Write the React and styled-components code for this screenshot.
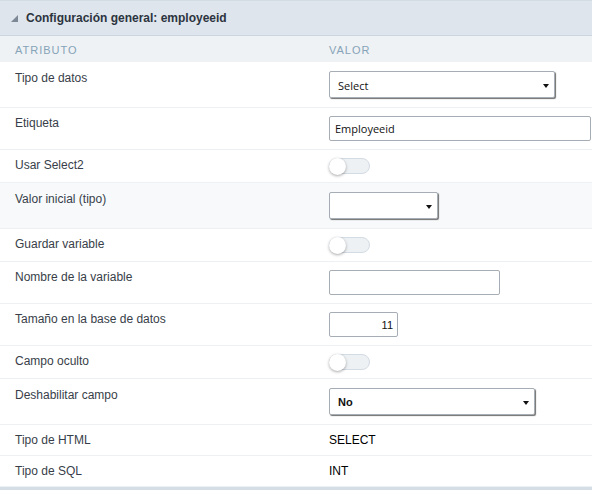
import React from 'react';
import styled, { createGlobalStyle } from 'styled-components';

const GlobalStyle = createGlobalStyle`
  html, body {
    margin: 0;
    padding: 0;
    background: #ffffff;
  }
  body {
    font-family: "Liberation Sans", Arial, sans-serif;
    font-size: 12px;
  }
`;

const Panel = styled.div`
  width: 592px;
  border-top: 1px solid #d3dbe3;
  border-bottom: 4px solid #d5dde5;
  box-sizing: border-box;
`;

const PanelHeader = styled.div`
  height: 34px;
  display: flex;
  align-items: center;
  gap: 8px;
  padding: 0 11px;
  background: #dfe5ec;
  border-bottom: 1px solid #cdd6df;
  font-weight: bold;
  font-size: 12px;
  color: #2c3440;
`;

const Corner = styled.span`
  width: 0;
  height: 0;
  border-style: solid;
  border-width: 0 0 7px 7px;
  border-color: transparent transparent #7d8896 transparent;
  margin-top: 1px;
`;

const Row = styled.div`
  display: grid;
  grid-template-columns: 314px 1fr;
  padding: ${({ $pad }) => $pad || '8px'} 15px;
  border-bottom: 1px solid #edf1f4;
  background: ${({ $shade }) => ($shade ? '#f7f9fb' : '#ffffff')};
  align-items: start;
`;

const HeadRow = styled(Row)`
  padding: 0 15px;
  height: 26px;
  align-items: center;
  background: #eef2f5;
  border-bottom: none;
`;

const HeadCell = styled.div`
  font-size: 11px;
  letter-spacing: 1px;
  text-transform: uppercase;
  color: #86a3b7;
  padding-top: 1px;
`;

const Label = styled.div`
  line-height: 14px;
  color: #383e49;
  font-size: 12px;
`;

const Value = styled.div`
  line-height: 14px;
  color: #000;
  font-size: 12px;
`;

const SelectBox = styled.div`
  position: relative;
  width: ${({ $w }) => $w}px;
  height: 27px;
  box-sizing: border-box;
  border: 1px solid #a7adb5;
  border-radius: 2px;
  box-shadow: 1px 1px 1px #6f6f6f;
  background: #fff;
  display: flex;
  align-items: center;
  padding: 1px 8px 0;
  font-family: ${({ $bold }) => ($bold ? '"Liberation Sans", Arial' : '"Open Sans"')}, sans-serif;
  font-weight: ${({ $bold }) => ($bold ? 'bold' : 'normal')};
  font-size: 11px;
  color: #111;

  &::after {
    content: '';
    position: absolute;
    right: 5px;
    top: 12px;
    border-style: solid;
    border-width: 4px 3px 0 3px;
    border-color: #111 transparent transparent transparent;
  }
`;

const TextBox = styled.div`
  width: ${({ $w }) => $w}px;
  height: 25px;
  box-sizing: border-box;
  border: 1px solid #a7adb5;
  border-radius: 2px;
  background: #fff;
  display: flex;
  align-items: center;
  justify-content: ${({ $right }) => ($right ? 'flex-end' : 'flex-start')};
  padding: 0 ${({ $right }) => ($right ? '4px' : '5px')};
  font-family: ${({ $right }) => ($right ? '"Liberation Sans", Arial' : '"Open Sans"')}, sans-serif;
  font-size: 11px;
  color: #111;
`;

const Toggle = styled.div`
  position: relative;
  width: 41px;
  height: 16px;
  box-sizing: border-box;
  border: 1px solid #d3dbe3;
  border-radius: 9px;
  background: #edf1f4;

  &::before {
    content: '';
    position: absolute;
    left: -1px;
    top: -1px;
    width: 17px;
    height: 17px;
    border-radius: 50%;
    background: #fff;
    box-shadow: 0 1px 3px rgba(0, 0, 0, 0.35);
  }
`;

const rows = [
  { label: 'Tipo de datos', control: <SelectBox $w={226}>Select</SelectBox>, pad: '9px' },
  { label: 'Etiqueta', control: <TextBox $w={262}>Employeeid</TextBox> },
  { label: 'Usar Select2', control: <Toggle /> },
  { label: 'Valor inicial (tipo)', control: <SelectBox $w={109} />, shade: true, pad: '9px' },
  { label: 'Guardar variable', control: <Toggle /> },
  { label: 'Nombre de la variable', control: <TextBox $w={171} /> },
  { label: 'Tamaño en la base de datos', control: <TextBox $w={69} $right>11</TextBox> },
  { label: 'Campo oculto', control: <Toggle /> },
  { label: 'Deshabilitar campo', control: <SelectBox $w={206} $bold>No</SelectBox>, pad: '9px' },
  { label: 'Tipo de HTML', control: <Value>SELECT</Value> },
  { label: 'Tipo de SQL', control: <Value>INT</Value> },
];

export default function App() {
  return (
    <>
      <GlobalStyle />
      <Panel>
        <PanelHeader>
          <Corner />
          <span>Configuración general: employeeid</span>
        </PanelHeader>
        <HeadRow>
          <HeadCell>Atributo</HeadCell>
          <HeadCell>Valor</HeadCell>
        </HeadRow>
        {rows.map((r) => (
          <Row key={r.label} $shade={r.shade} $pad={r.pad}>
            <Label>{r.label}</Label>
            <div>{r.control}</div>
          </Row>
        ))}
      </Panel>
    </>
  );
}
